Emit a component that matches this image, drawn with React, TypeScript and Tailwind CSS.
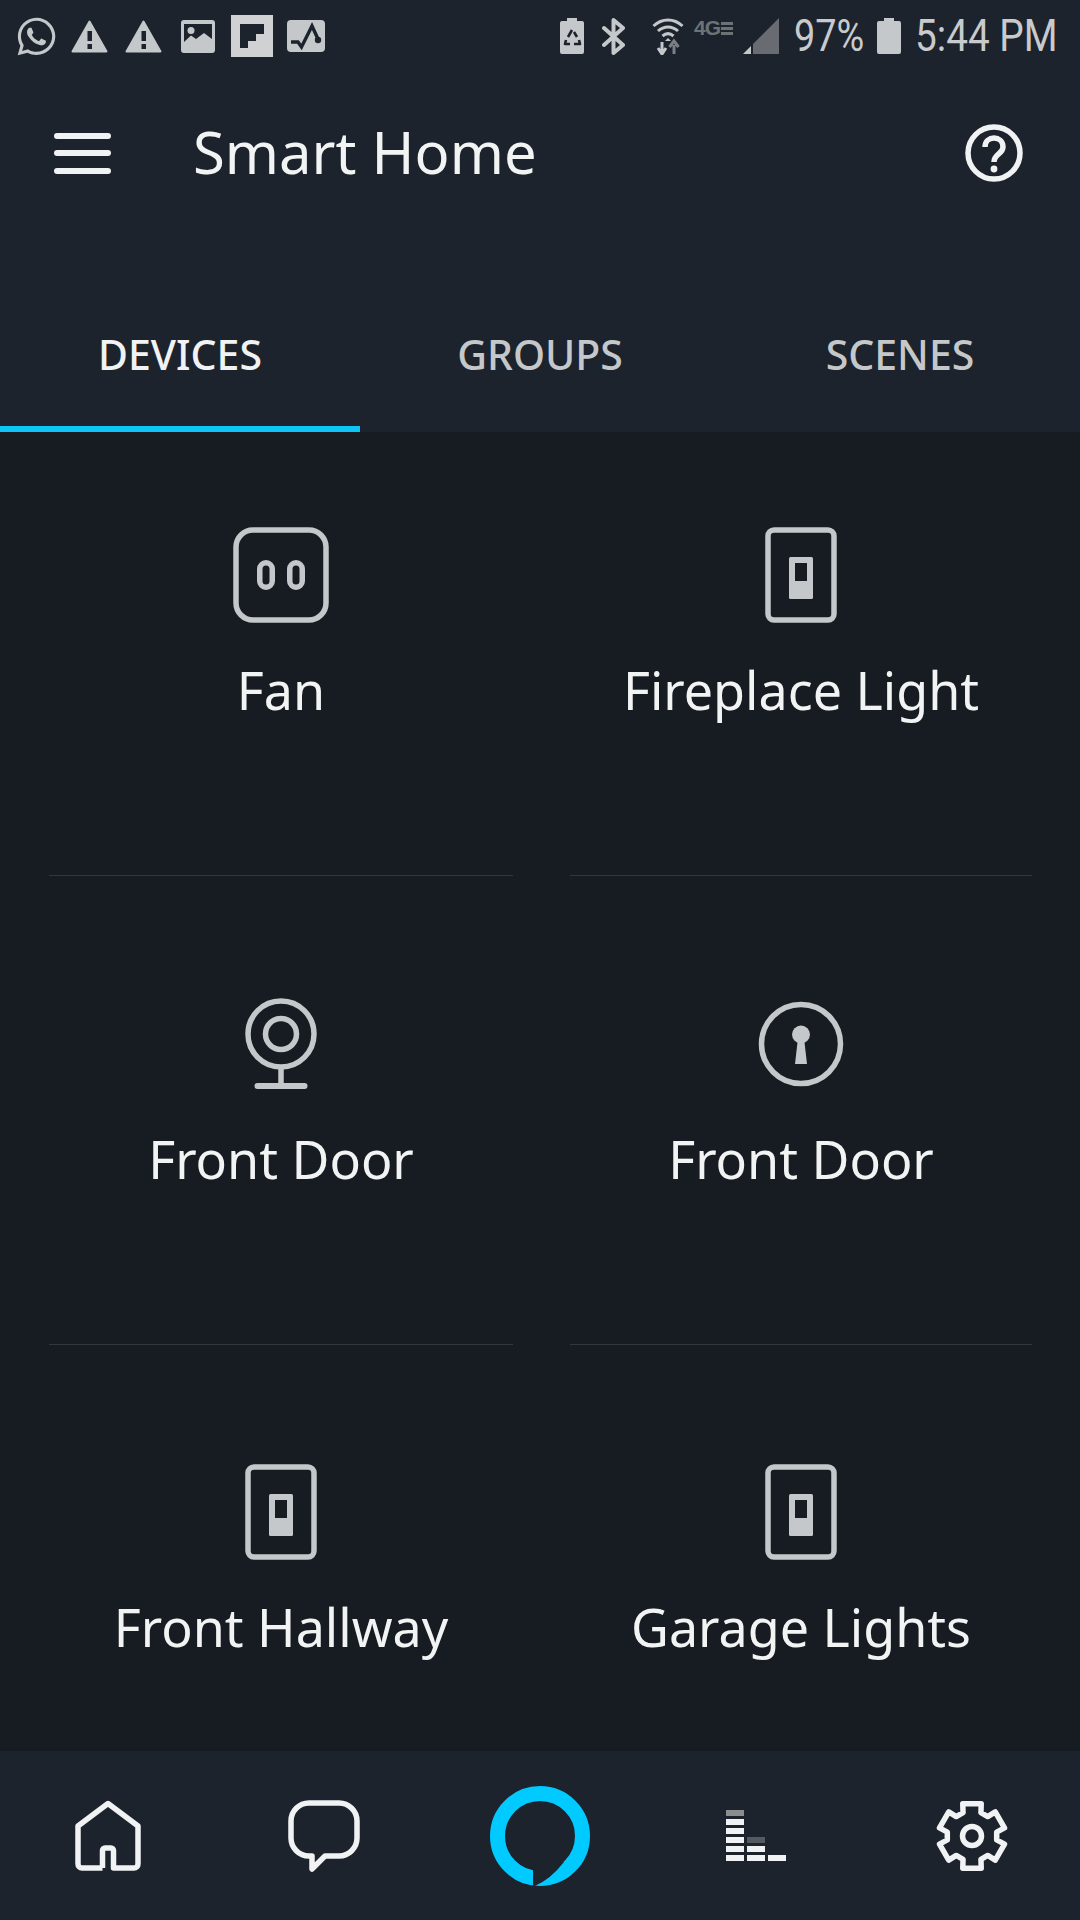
import React from 'react';
import { FaWhatsapp } from 'react-icons/fa';

const ICON = '#c4c8ca';
const LIGHT = '#f0f2f3';
const BAR = '#1c232c';

const WarnIcon = ({ className }: { className?: string }) => (
  <svg viewBox="0 0 37 33" className={`w-[37px] h-[33px] ${className ?? ''}`}>
    <path d="M18.5 1.5 L35.5 31.5 H1.5 Z" fill={ICON} stroke={ICON} strokeWidth="2" strokeLinejoin="round" />
    <rect x="16.5" y="11" width="4.5" height="10" fill={BAR} />
    <rect x="16.5" y="24" width="4.5" height="5" fill={BAR} />
  </svg>
);

const StatusLeft = () => (
  <div className="flex items-center">
    <FaWhatsapp className="w-[43px] h-[43px] ml-[15px]" style={{ color: ICON }} />
    <WarnIcon className="ml-[13px]" />
    <WarnIcon className="ml-[17px]" />
    <svg viewBox="0 0 34 33" className="w-[34px] h-[33px] ml-[19px]">
      <rect width="34" height="33" rx="3" fill={ICON} />
      <rect x="3" y="4" width="28" height="24" fill={BAR} />
      <circle cx="10" cy="10.5" r="3.5" fill={ICON} />
      <path d="M3 22 L10 15.5 L15 19 L23 13 L31 19 V30 H3 Z" fill={ICON} />
    </svg>
    <svg viewBox="0 0 42 42" className="w-[42px] h-[42px] ml-[16px]">
      <rect width="42" height="42" fill="#cfd1d3" />
      <path d="M9 9 H33 V19 H25 V26 H17 V33 H9 Z" fill={BAR} />
    </svg>
    <svg viewBox="0 0 38 32" className="w-[38px] h-[32px] ml-[14px]">
      <rect width="38" height="32" rx="4" fill={ICON} />
      <path d="M4 22 H11 L14.5 27 L25 6 L31 19" fill="none" stroke={BAR} strokeWidth="3.4" />
      <circle cx="31" cy="20" r="3.2" fill={BAR} />
    </svg>
  </div>
);

const StatusRight = () => (
  <div className="flex items-center pr-[23px]">
    <svg viewBox="0 0 24 36" className="w-[24px] h-[36px]">
      <path d="M7 0 H17 V3 H22 a2 2 0 0 1 2 2 V34 a2 2 0 0 1 -2 2 H2 a2 2 0 0 1 -2 -2 V5 a2 2 0 0 1 2 -2 H7 Z" fill={ICON} />
      <path d="M12 12 L8 19 M14 14 L17 19 M6 22 L5 26 H10 M19 22 L20 26 H14" fill="none" stroke={BAR} strokeWidth="2.6" strokeLinejoin="round" />
    </svg>
    <svg viewBox="0 0 24 37" className="w-[24px] h-[37px] ml-[18px]">
      <path d="M2 10 L21 27 L11.5 35 V2 L21 10 L2 27" fill="none" stroke={ICON} strokeWidth="4" strokeLinejoin="round" strokeLinecap="round" />
    </svg>
    <svg viewBox="0 0 32 37" className="w-[32px] h-[37px] ml-[26px]">
      <path d="M1.5 8 C10 0 22 0 30.5 8 M6 13 C12 7.5 20 7.5 26 13 M10.5 18 C14 15 18 15 21.5 18" fill="none" stroke={ICON} strokeWidth="3" />
      <path d="M16 20 L19 23 H13 Z" fill={ICON} />
      <path d="M10 24 V33 M6 30 L10 36 L14 30" fill="none" stroke={ICON} strokeWidth="3" />
      <path d="M22 36 V27 M17.5 29 L22 23 L26.5 29" fill="none" stroke="#7c8085" strokeWidth="3" />
    </svg>
    <div className="w-[41px] ml-[10px] h-[18px] -mt-[16px] flex items-center gap-[1px]">
      <span className="text-[21px] leading-[18px] font-bold text-[#6d7277] tracking-[-1px] [font-family:'Liberation_Sans',sans-serif]">4G</span>
      <span className="flex flex-col gap-[2px]">
        <span className="block w-[12px] h-[3px] bg-[#6d7277]" />
        <span className="block w-[12px] h-[3px] bg-[#6d7277]" />
        <span className="block w-[12px] h-[3px] bg-[#6d7277]" />
      </span>
    </div>
    <svg viewBox="0 0 36 36" className="w-[36px] h-[36px] ml-[8px]">
      <path d="M0 36 L8 28 V36 Z" fill={ICON} />
      <path d="M10 26 L36 0 V36 H10 Z" fill="#686c72" />
    </svg>
    <div className="w-[70px] ml-[15px] text-[44px] leading-none whitespace-nowrap origin-left scale-x-[.86] text-[#c8cbcd] [font-family:Roboto,sans-serif]">
      97%
    </div>
    <svg viewBox="0 0 24 36" className="w-[24px] h-[36px] ml-[13px]">
      <path d="M7 0 H17 V3 H22 a2 2 0 0 1 2 2 V34 a2 2 0 0 1 -2 2 H2 a2 2 0 0 1 -2 -2 V5 a2 2 0 0 1 2 -2 H7 Z" fill={ICON} />
    </svg>
    <div className="w-[142px] ml-[14px] text-[44px] leading-none whitespace-nowrap origin-left scale-x-[.88] text-[#c8cbcd] [font-family:Roboto,sans-serif]">
      5:44 PM
    </div>
  </div>
);

const PlugIcon = () => (
  <svg viewBox="0 0 96 96" className="w-[96px] h-[96px]" fill="none" stroke={ICON} strokeWidth="5.5">
    <rect x="3" y="3" width="90" height="90" rx="17" />
    <rect x="26.75" y="35.75" width="12.5" height="24.5" rx="6.25" />
    <rect x="56.75" y="35.75" width="12.5" height="24.5" rx="6.25" />
  </svg>
);

const SwitchIcon = () => (
  <svg viewBox="0 0 96 96" className="w-[96px] h-[96px]">
    <rect x="15" y="3" width="66" height="90" rx="6" fill="none" stroke={ICON} strokeWidth="5.5" />
    <rect x="36" y="30" width="24" height="42" rx="1.5" fill={ICON} />
    <rect x="42" y="36" width="12" height="18" fill="#171c22" />
  </svg>
);

const CameraIcon = () => (
  <svg viewBox="0 0 96 96" className="w-[96px] h-[96px]" fill="none" stroke={ICON} strokeWidth="5.5">
    <circle cx="48" cy="38" r="33" />
    <circle cx="48" cy="38" r="15.5" />
    <path d="M48 71 V90" />
    <path d="M24.5 90 H71.5" strokeLinecap="round" strokeWidth="6" />
  </svg>
);

const LockIcon = () => (
  <svg viewBox="0 0 96 96" className="w-[96px] h-[96px]">
    <circle cx="48" cy="48" r="39.5" fill="none" stroke={ICON} strokeWidth="5.5" />
    <circle cx="48" cy="38.5" r="9" fill={ICON} />
    <path d="M45 42 H51 L54 68 H42 Z" fill={ICON} />
  </svg>
);

const HomeIcon = () => (
  <svg viewBox="0 0 72 72" className="w-[72px] h-[72px]" fill="none" stroke={LIGHT} strokeWidth="5.5" strokeLinejoin="round">
    <path d="M30.5 68 H10 a4 4 0 0 1 -4 -4 V26 L36 3.5 L66 26 V64 a4 4 0 0 1 -4 4 H41.5 V50.5 a2.5 2.5 0 0 0 -2.5 -2.5 H33 a2.5 2.5 0 0 0 -2.5 2.5 V68" />
  </svg>
);

const ChatIcon = () => (
  <svg viewBox="0 0 72 72" className="w-[72px] h-[72px]" fill="none" stroke={LIGHT} strokeWidth="5.5" strokeLinejoin="round">
    <path d="M21 3 H51 a18 18 0 0 1 18 18 V38 a18 18 0 0 1 -18 18 H37 L24 69 V56 h-3 a18 18 0 0 1 -18 -18 V21 a18 18 0 0 1 18 -18 Z" />
  </svg>
);

const AlexaIcon = () => (
  <svg viewBox="0 0 100 100" className="w-[100px] h-[100px]">
    <circle cx="50" cy="50" r="42.5" fill="none" stroke="#00caff" strokeWidth="15" />
    <path d="M43 82 V100 H44.5 Q60 94 74 76 L50 70 Z" fill={BAR} />
  </svg>
);

const StatsIcon = () => (
  <svg viewBox="0 0 60 51" className="w-[60px] h-[51px]">
    <rect x="0" y="0" width="18" height="6" fill="#8a8d90" />
    {[9, 18, 27, 36, 45].map((y) => (
      <rect key={y} x="0" y={y} width="18" height="6" fill={LIGHT} />
    ))}
    <rect x="21" y="27" width="18" height="6" fill="#555a60" />
    <rect x="21" y="36" width="18" height="6" fill={LIGHT} />
    <rect x="21" y="45" width="18" height="6" fill={LIGHT} />
    <rect x="42" y="45" width="18" height="6" fill={LIGHT} />
  </svg>
);

// six tooth outline, worked out once
const gearPoints = Array.from({ length: 6 }, (_, k) => {
  const base = -90 + 60 * k;
  return [
    [base - 16, 33.5],
    [base + 16, 33.5],
    [base + 21, 25],
    [base + 39, 25],
  ]
    .map(([deg, r]) => {
      const rad = (deg * Math.PI) / 180;
      return `${(36 + r * Math.cos(rad)).toFixed(2)},${(36 + r * Math.sin(rad)).toFixed(2)}`;
    })
    .join(' ');
}).join(' ');

const GearIcon = () => (
  <svg viewBox="0 0 72 72" className="w-[72px] h-[72px]" fill="none" stroke={LIGHT} strokeWidth="5.5" strokeLinejoin="round">
    <polygon points={gearPoints} />
    <circle cx="36" cy="36" r="9.5" />
  </svg>
);

const devices = [
  { label: 'Fan', icon: PlugIcon, pad: 'pt-[95px]' },
  { label: 'Fireplace Light', icon: SwitchIcon, pad: 'pt-[95px]' },
  { label: 'Front Door', icon: CameraIcon, pad: 'pt-[120px]' },
  { label: 'Front Door', icon: LockIcon, pad: 'pt-[120px]' },
  { label: 'Front Hallway', icon: SwitchIcon, pad: 'pt-[119px]' },
  { label: 'Garage Lights', icon: SwitchIcon, pad: 'pt-[119px]' },
];

export default function App() {
  return (
    <div className="w-[1080px] h-[1920px] flex flex-col overflow-hidden bg-[#171c22] [font-family:'Noto_Sans',sans-serif]">
      <header className="bg-[#1c232c]">
        <div className="h-[72px] flex items-center justify-between">
          <StatusLeft />
          <StatusRight />
        </div>

        <div className="h-[162px] flex items-center">
          <div className="ml-[54px] w-[57px] flex flex-col gap-[11.5px]">
            <span className="block h-[6px] rounded-full bg-[#f0f2f3]" />
            <span className="block h-[6px] rounded-full bg-[#f0f2f3]" />
            <span className="block h-[6px] rounded-full bg-[#f0f2f3]" />
          </div>
          <h1 className="ml-[82px] -mt-[3px] flex-1 text-[58px] leading-none text-[#f2f4f4]">Smart Home</h1>
          <svg viewBox="0 0 58 58" className="w-[58px] h-[58px] mr-[57px]" fill="none" stroke={LIGHT} strokeWidth="5.5">
            <circle cx="29" cy="29" r="26" />
            <path d="M20 23 C20 11 38 11 38 23 C38 30 29 30 29 38" strokeWidth="5.5" />
            <circle cx="29" cy="45" r="3.4" fill={LIGHT} stroke="none" />
          </svg>
        </div>

        <div className="h-[198px] grid grid-cols-3 text-[41px] font-medium">
          <div className="pt-[50px] flex items-center justify-center border-b-[6px] border-[#0cc5f5] text-[#f0f2f3]">DEVICES</div>
          <div className="pt-[50px] flex items-center justify-center border-b-[6px] border-transparent text-[#c5c8ca]">GROUPS</div>
          <div className="pt-[50px] flex items-center justify-center border-b-[6px] border-transparent text-[#c5c8ca]">SCENES</div>
        </div>
      </header>

      <main className="flex-1 min-h-0 pl-[49px] grid grid-cols-[464px_462px] gap-x-[57px] grid-rows-[444px_469px_1fr]">
        {devices.map(({ label, icon: Icon, pad }, i) => (
          <div key={i} className={`flex flex-col items-center ${pad} ${i < 4 ? 'border-b border-[#32373c]' : ''}`}>
            <Icon />
            <div className="mt-[33px] text-[52px] leading-[68px] text-[#f2f4f4]">{label}</div>
          </div>
        ))}
      </main>

      <nav className="h-[169px] bg-[#1c232c] grid grid-cols-5 place-items-center">
        <HomeIcon />
        <ChatIcon />
        <AlexaIcon />
        <StatsIcon />
        <GearIcon />
      </nav>
    </div>
  );
}
